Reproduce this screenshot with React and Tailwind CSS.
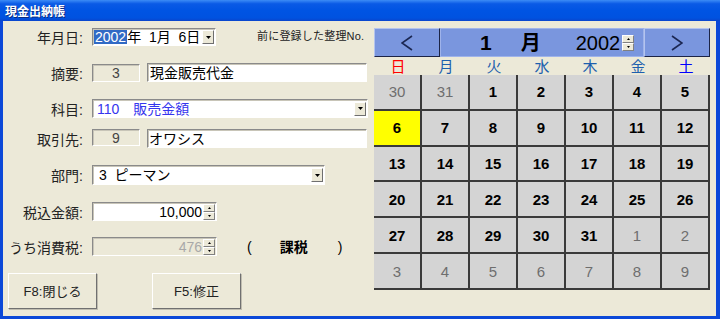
import React from "react";

const FONT = '"Liberation Sans", "Noto Sans CJK JP", sans-serif';

function DropBtn() {
  return (
    <div className="w-[12px] h-[14px] bg-[#ECE9D8] border border-t-white border-l-white border-r-[#6f6f6f] border-b-[#6f6f6f] flex items-center justify-center shrink-0">
      <svg width="5" height="3" viewBox="0 0 5 3">
        <path d="M0 0H5L2.5 3Z" fill="#000" />
      </svg>
    </div>
  );
}

function Spin() {
  return (
    <div className="flex flex-col w-[12px] h-[16px] shrink-0">
      <div className="h-[8px] bg-[#ECE9D8] border border-t-white border-l-white border-r-[#808080] border-b-[#808080] flex items-center justify-center">
        <svg width="3" height="2" viewBox="0 0 3 2">
          <path d="M1.5 0L3 2H0Z" fill="#000" />
        </svg>
      </div>
      <div className="h-[8px] bg-[#ECE9D8] border border-t-white border-l-white border-r-[#808080] border-b-[#808080] flex items-center justify-center">
        <svg width="3" height="2" viewBox="0 0 3 2">
          <path d="M0 0H3L1.5 2Z" fill="#000" />
        </svg>
      </div>
    </div>
  );
}

const sunken =
  "border border-t-[#8a8a8a] border-l-[#8a8a8a] border-b-white border-r-white shadow-[inset_1px_1px_0_#c8c5b8]";

function Label({ children }) {
  return (
    <div className="w-[80px] text-right text-[14px] leading-none text-[#222] shrink-0 pt-[2px]">
      {children}
    </div>
  );
}

const cal = [
  [[30, 0], [31, 0], [1, 1], [2, 1], [3, 1], [4, 1], [5, 1]],
  [[6, 2], [7, 1], [8, 1], [9, 1], [10, 1], [11, 1], [12, 1]],
  [[13, 1], [14, 1], [15, 1], [16, 1], [17, 1], [18, 1], [19, 1]],
  [[20, 1], [21, 1], [22, 1], [23, 1], [24, 1], [25, 1], [26, 1]],
  [[27, 1], [28, 1], [29, 1], [30, 1], [31, 1], [1, 0], [2, 0]],
  [[3, 0], [4, 0], [5, 0], [6, 0], [7, 0], [8, 0], [9, 0]],
];

const week = [
  ["日", "text-[#ff0000]"],
  ["月", "text-[#1d5fae]"],
  ["火", "text-[#1d5fae]"],
  ["水", "text-[#1d5fae]"],
  ["木", "text-[#1d5fae]"],
  ["金", "text-[#1d5fae]"],
  ["土", "text-[#0000ff]"],
];

export default function App() {
  return (
    <div
      className="w-[720px] h-[319px] flex flex-col overflow-hidden bg-[#0b48d8]"
      style={{ fontFamily: FONT }}
    >
      {/* title bar */}
      <div className="h-[21px] shrink-0 flex items-center pl-[5px] bg-[linear-gradient(to_bottom,#3c8cf6_0%,#0a5ae6_18%,#0054e3_50%,#0052e0_85%,#0a45cc_100%)]">
        <span className="text-white font-bold text-[12px] leading-none pt-[2px] [text-shadow:1px_1px_0_#0a2a80]">
          現金出納帳
        </span>
      </div>

      {/* body */}
      <div className="flex-1 ml-[3px] mr-[4px] mb-[3px] bg-[#ECE9D8] flex">
        {/* left form */}
        <div className="w-[371px] shrink-0 flex flex-col">
          {/* row 1 */}
          <div className="mt-[7px] h-[18px] flex items-center">
            <Label>年月日:</Label>
            <div className={`ml-[9px] w-[124px] h-[18px] bg-white flex items-center ${sunken}`}>
              <div className="flex-1 flex items-center text-[14px] leading-none text-black pl-[1px] whitespace-pre">
                <span className="bg-[#316ac5] text-white px-[1px]">2002</span>
                <span>年  1月  6日</span>
              </div>
              <div className="mr-[1px]">
                <DropBtn />
              </div>
            </div>
            <div className="ml-[41px] self-start text-[11px] leading-none text-[#222] pt-[3px] tracking-[0.2px]">
              前に登録した整理No.
            </div>
          </div>

          {/* row 2 */}
          <div className="mt-[17px] h-[19px] flex items-center">
            <Label>摘要:</Label>
            <div className={`ml-[9px] w-[48px] h-[18px] flex items-center justify-center text-[14px] leading-none text-[#444] ${sunken}`}>
              3
            </div>
            <div className={`ml-[7px] w-[220px] h-[19px] bg-white flex items-center pl-[2px] text-[14px] leading-none text-black ${sunken}`}>
              現金販売代金
            </div>
          </div>

          {/* row 3 */}
          <div className="mt-[17px] h-[19px] flex items-center">
            <Label>科目:</Label>
            <div className={`ml-[9px] w-[276px] h-[19px] bg-white flex items-center ${sunken}`}>
              <div className="flex-1 flex items-center text-[14px] leading-none text-[#3535ee] pl-[4px] whitespace-pre">
                110　販売金額
              </div>
              <div className="mr-[1px]">
                <DropBtn />
              </div>
            </div>
          </div>

          {/* row 4 */}
          <div className="mt-[11px] h-[19px] flex items-center">
            <Label>取引先:</Label>
            <div className={`ml-[9px] w-[48px] h-[17px] self-start flex items-center justify-center text-[14px] leading-none text-[#444] ${sunken}`}>
              9
            </div>
            <div className={`ml-[7px] w-[220px] h-[19px] bg-white flex items-center pl-[1px] text-[14px] leading-none text-black ${sunken}`}>
              オワシス
            </div>
          </div>

          {/* row 5 */}
          <div className="mt-[17px] h-[20px] flex items-center">
            <Label>部門:</Label>
            <div className={`ml-[9px] w-[233px] h-[20px] bg-white flex items-center ${sunken}`}>
              <div className="flex-1 flex items-center text-[14px] leading-none text-black pl-[6px] whitespace-pre">
                3  ピーマン
              </div>
              <div className="mr-[1px]">
                <DropBtn />
              </div>
            </div>
          </div>

          {/* row 6 */}
          <div className="mt-[17px] h-[19px] flex items-center">
            <Label>税込金額:</Label>
            <div className={`ml-[9px] w-[125px] h-[19px] bg-white flex items-center ${sunken}`}>
              <div className="flex-1 text-right text-[14px] leading-none text-black pr-[1px]">
                10,000
              </div>
              <div className="mr-[1px]">
                <Spin />
              </div>
            </div>
          </div>

          {/* row 7 */}
          <div className="mt-[16px] h-[19px] flex items-center">
            <Label>うち消費税:</Label>
            <div className={`ml-[9px] w-[125px] h-[19px] flex items-center ${sunken}`}>
              <div className="flex-1 text-right text-[14px] leading-none text-[#a8a8a8] pr-[1px]">
                476
              </div>
              <div className="mr-[1px]">
                <Spin />
              </div>
            </div>
            <span className="ml-[30px] text-[14px] leading-none text-black">(</span>
            <span className="ml-[28px] text-[14px] leading-none font-bold text-black">課税</span>
            <span className="ml-[30px] text-[14px] leading-none text-black">)</span>
          </div>

          {/* buttons */}
          <div className="mt-[17px] h-[36px] flex">
            <div className="ml-[5px] w-[89px] h-[36px] bg-[#ECE9D8] border border-t-white border-l-white border-r-[#707070] border-b-[#707070] shadow-[1px_1px_0_#c0bdb0] flex items-center justify-center text-[13px] leading-none text-[#222]">
              F8:閉じる
            </div>
            <div className="ml-[55px] w-[89px] h-[36px] bg-[#ECE9D8] border border-t-white border-l-white border-r-[#707070] border-b-[#707070] shadow-[1px_1px_0_#c0bdb0] flex items-center justify-center text-[13px] leading-none text-[#222]">
              F5:修正
            </div>
          </div>
        </div>

        {/* calendar */}
        <div className="w-[336px] shrink-0 flex flex-col pt-[7px]">
          {/* header */}
          <div className="h-[29px] flex">
            <div className="w-[66px] bg-[#7a96de] border-t border-l border-t-[#b4c4ee] border-l-[#b4c4ee] border-r border-b border-r-[#1c2446] border-b-[#1c2446] flex items-center justify-center">
              <svg width="12" height="16" viewBox="0 0 12 16">
                <polyline points="11,1 1,8 11,15" fill="none" stroke="#1b2752" strokeWidth="1.6" />
              </svg>
            </div>
            <div className="w-[204px] bg-[#7a96de] border border-[#9fb3ea] flex items-center">
              <span className="ml-[39px] text-[21px] font-bold leading-none text-black">1</span>
              <span className="ml-[29px] text-[20px] font-bold leading-none text-black">月</span>
              <span className="ml-[35px] text-[20px] leading-none text-black">2002</span>
              <div className="ml-[2px]">
                <Spin />
              </div>
            </div>
            <div className="w-[66px] bg-[#7a96de] border-t border-l border-t-[#b4c4ee] border-l-[#b4c4ee] border-r border-b border-r-[#1c2446] border-b-[#1c2446] flex items-center justify-center">
              <svg width="12" height="16" viewBox="0 0 12 16">
                <polyline points="1,1 11,8 1,15" fill="none" stroke="#1b2752" strokeWidth="1.6" />
              </svg>
            </div>
          </div>

          {/* weekday row */}
          <div className="h-[18px] grid grid-cols-7">
            {week.map(([w, c]) => (
              <div key={w} className={`flex items-center justify-center text-[15px] leading-none ${c}`}>
                {w}
              </div>
            ))}
          </div>

          {/* grid */}
          <div className="h-[215px] grid grid-cols-7 grid-rows-6">
            {cal.flat().map(([d, t], i) => (
              <div
                key={i}
                className={`flex items-center justify-center border-r-2 border-b-2 border-[#3a3a3a] text-[15px] leading-none ${
                  t === 2 ? "bg-[#ffff00]" : "bg-[#d4d4d4]"
                } ${t === 0 ? "text-[#6e6e6e]" : "font-bold text-black"}`}
              >
                {d}
              </div>
            ))}
          </div>
        </div>
      </div>
    </div>
  );
}
